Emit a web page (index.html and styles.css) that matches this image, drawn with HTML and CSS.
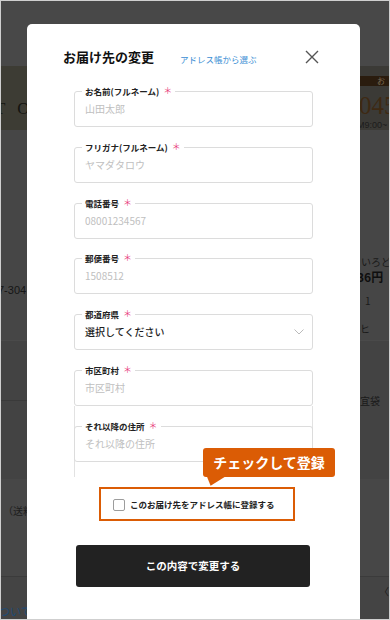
FILE: index.html
```html
<!DOCTYPE html>
<html lang="ja">
<head>
    <meta charset="UTF-8">
    <meta name="viewport" content="width=device-width, initial-scale=1.0">
    <title>お届け先の変更</title>
    <link rel="stylesheet" href="styles.css">
</head>
<body>
    <div class="frame">
        <!-- dimmed page behind the modal -->
        <div class="backdrop">
            <div class="bg-row bg-head"></div>
            <div class="bg-row bg-hero">
                <div class="bg-left"><span class="hero-logo">T O</span></div>
                <div class="bg-right">
                    <div class="hero-bar">お</div>
                    <div class="hero-tel">045</div>
                    <div class="hero-time">M9:00~</div>
                </div>
            </div>
            <div class="bg-row bg-order">
                <div class="bg-left"><p class="bg-zip">7-304</p></div>
                <div class="bg-right">
                    <p class="bg-name">いろどり</p>
                    <p class="bg-price">36円</p>
                    <p class="bg-qty">1</p>
                    <p class="bg-note">ヒ</p>
                </div>
            </div>
            <div class="bg-row bg-wrap">
                <div class="bg-left"><div class="bg-line"></div></div>
                <div class="bg-right"><p class="bg-bag">宜袋</p></div>
            </div>
            <div class="bg-row bg-ship">
                <div class="bg-left"><p class="bg-fee">（送料</p></div>
                <div class="bg-right"></div>
            </div>
            <div class="bg-row bg-foot">
                <div class="bg-left"><p class="bg-about">ついて</p></div>
                <div class="bg-right"><p class="bg-mark">〈</p></div>
            </div>
        </div>

        <div class="modal">
            <div class="modal-head">
                <h2 class="modal-title">お届け先の変更</h2>
                <a class="modal-link" href="#">アドレス帳から選ぶ</a>
                <svg class="modal-close" viewBox="0 0 14 14" width="14" height="14">
                    <path d="M1 1 L13 13 M13 1 L1 13" stroke="#555" stroke-width="1.4" fill="none"/>
                </svg>
            </div>

            <form class="form">
                <div class="field">
                    <label class="field-label">お名前(フルネーム)<span class="req">＊</span></label>
                    <input class="field-input" type="text" placeholder="山田太郎">
                </div>
                <div class="field">
                    <label class="field-label">フリガナ(フルネーム)<span class="req">＊</span></label>
                    <input class="field-input" type="text" placeholder="ヤマダタロウ">
                </div>
                <div class="field">
                    <label class="field-label">電話番号<span class="req">＊</span></label>
                    <input class="field-input" type="text" placeholder="08001234567">
                </div>
                <div class="field">
                    <label class="field-label">郵便番号<span class="req">＊</span></label>
                    <input class="field-input" type="text" placeholder="1508512">
                </div>
                <div class="field field-select">
                    <label class="field-label">都道府県<span class="req">＊</span></label>
                    <span class="select-text">選択してください</span>
                    <svg class="chevron" viewBox="0 0 10 6" width="10" height="6">
                        <path d="M0.5 0.5 L5 5 L9.5 0.5" stroke="#bbb" stroke-width="1" fill="none"/>
                    </svg>
                </div>
                <div class="field">
                    <label class="field-label">市区町村<span class="req">＊</span></label>
                    <input class="field-input" type="text" placeholder="市区町村">
                </div>
                <div class="field-rest">
                    <div class="field">
                        <label class="field-label">それ以降の住所<span class="req">＊</span></label>
                        <input class="field-input" type="text" placeholder="それ以降の住所">
                    </div>
                </div>

                <div class="register">
                    <div class="callout">チェックして登録</div>
                    <span class="check"></span>
                    <span class="register-text">このお届け先をアドレス帳に登録する</span>
                </div>

                <button class="submit" type="button">この内容で変更する</button>
            </form>
        </div>
    </div>
</body>
</html>
```

FILE: styles.css
```css
body, h2, p {
    margin: 0;
    padding: 0;
}

body {
    font-family: "Noto Sans CJK JP", "Liberation Sans", sans-serif;
    background-color: #fff;
}

.frame {
    position: relative;
    width: 390px;
    height: 620px;
    border: 1px solid #cfcfcf;
    box-sizing: border-box;
    overflow: hidden;
    background-color: #454545;
}

/* backdrop */

.bg-row {
    display: flex;
    justify-content: space-between;
    overflow: hidden;
}

.bg-left {
    width: 27px;
    overflow: hidden;
    white-space: nowrap;
}

.bg-right {
    width: 30px;
    overflow: hidden;
    white-space: nowrap;
}

.bg-head {
    height: 65px;
    background-color: #484848;
}

.bg-hero {
    height: 64px;
    background-color: #3d3c34;
}

.hero-logo {
    display: block;
    margin: 34px 0 0 -6px;
    font-family: "Liberation Serif", serif;
    font-size: 17px;
    line-height: 18px;
    letter-spacing: 4px;
    color: #141410;
}

.bg-hero .bg-right {
    background-color: #3b3a36;
}

.hero-bar {
    margin-top: 10px;
    height: 10px;
    padding-left: 18px;
    background-color: #2a1c0e;
    color: #7d6d55;
    font-size: 8px;
    line-height: 10px;
}

.hero-tel {
    margin-top: 8px;
    font-family: "Liberation Serif", serif;
    font-size: 25px;
    line-height: 24px;
    color: #3e2913;
}

.hero-time {
    margin-top: 2px;
    margin-left: -2px;
    font-family: "Liberation Sans", sans-serif;
    font-size: 9px;
    line-height: 10px;
    color: #1c1c1c;
}

.bg-order {
    height: 210px;
    background-color: #464646;
}

.bg-zip {
    margin: 153px 0 0 -3px;
    font-family: "Liberation Sans", sans-serif;
    font-size: 11px;
    line-height: 14px;
    color: #151515;
}

.bg-right p {
    font-size: 10px;
    line-height: 14px;
    color: #1a1a1a;
}

.bg-name {
    margin: 125px 0 0 2px;
}

.bg-right .bg-price {
    margin: 1px 0 0 -2px;
    font-weight: bold;
    font-size: 12px;
    color: #0f0f0f;
}

.bg-qty {
    margin: 10px 0 0 6px;
}

.bg-note {
    margin: 14px 0 0 1px;
}

.bg-wrap {
    height: 138px;
    background-color: #434343;
    border-top: 1px solid #4a4a4a;
}

.bg-line {
    height: 59px;
    border-bottom: 1px solid #3a3a3a;
}

.bg-bag {
    margin: 53px 0 0 1px;
}

.bg-ship {
    height: 97px;
    background-color: #474747;
}

.bg-fee {
    margin: 25px 0 0 2px;
    font-size: 10px;
    line-height: 14px;
    color: #1d1d1d;
}

.bg-foot {
    height: 50px;
    background-color: #444;
    border-top: 1px solid #3b3b3b;
}

.bg-about {
    margin: 27px 0 0 -2px;
    font-size: 11px;
    line-height: 14px;
    color: #1f4b74;
}

.bg-mark {
    margin: 8px 0 0 20px;
}

/* modal */

.modal {
    position: absolute;
    top: 23px;
    left: 26px;
    bottom: 0;
    width: 333px;
    padding-top: 24px;
    box-sizing: border-box;
    background-color: #fff;
    border-radius: 5px 5px 0 0;
}

.modal-head {
    display: flex;
    align-items: center;
    height: 18px;
    padding: 0 41px 0 36px;
}

.modal-title {
    font-size: 13px;
    font-weight: bold;
    line-height: 18px;
    color: #111;
}

.modal-link {
    margin: 3px 0 0 26px;
    font-size: 8.5px;
    line-height: 12px;
    color: #3a8ed4;
    text-decoration: none;
}

.modal-close {
    margin-left: auto;
}

.form {
    margin-top: 25px;
    padding: 0 47px;
}

.field {
    position: relative;
    display: flex;
    align-items: center;
    height: 36px;
    padding: 0 10px;
    border: 1px solid #dcdcdc;
    border-radius: 3px;
    box-sizing: border-box;
}

.field + .field {
    margin-top: 19.8px;
}

.field-label {
    position: absolute;
    top: -7px;
    left: 7px;
    display: flex;
    align-items: center;
    gap: 4px;
    padding: 0 3px;
    background-color: #fff;
    font-size: 8.5px;
    font-weight: bold;
    line-height: 12px;
    color: #222;
}

.req {
    color: #e8417c;
    font-size: 9px;
    font-weight: normal;
}

.field-input {
    width: 100%;
    padding: 0;
    border: none;
    outline: none;
    background: transparent;
    font-family: "Noto Sans CJK JP", "Liberation Sans", sans-serif;
    font-size: 10px;
    line-height: 14px;
    color: #222;
}

.field-input::placeholder {
    color: #c0c0c0;
}

.field-select {
    justify-content: space-between;
    padding-right: 8px;
}

.select-text {
    font-size: 10px;
    line-height: 14px;
    color: #1e1e1e;
    font-weight: 500;
}

.field-rest {
    padding: 19.8px 0 15px;
    border-left: 1px solid #e2e2e2;
    border-right: 1px solid #e2e2e2;
}

.field-rest .field {
    margin: 0 -1px;
}

.register {
    position: relative;
    display: flex;
    align-items: center;
    gap: 5px;
    width: 196px;
    height: 34px;
    margin: 10px 0 0 25px;
    padding-left: 12px;
    border: 2px solid #db5c05;
    box-sizing: border-box;
}

.check {
    width: 12px;
    height: 12px;
    margin-top: 3px;
    border: 1px solid #9c9c9c;
    border-radius: 2px;
    box-sizing: border-box;
}

.register-text {
    font-size: 8.5px;
    font-weight: bold;
    line-height: 12px;
    color: #222;
}

.callout {
    position: absolute;
    top: -41px;
    left: 102px;
    display: flex;
    align-items: center;
    justify-content: center;
    width: 132px;
    height: 29px;
    background-color: #db5c05;
    border-radius: 3px;
    color: #fff;
    font-size: 14px;
    font-weight: bold;
    line-height: 18px;
}

.callout::after {
    content: "";
    position: absolute;
    top: 100%;
    left: 4px;
    width: 18px;
    height: 9px;
    background-color: #db5c05;
    clip-path: polygon(0 0, 100% 0, 20% 100%);
}

.submit {
    display: block;
    width: 234px;
    height: 42px;
    margin: 24px 0 0 2px;
    border: none;
    border-radius: 3px;
    background-color: #222;
    color: #fff;
    font-family: "Noto Sans CJK JP", "Liberation Sans", sans-serif;
    font-size: 10.5px;
    font-weight: bold;
    cursor: pointer;
}
```
